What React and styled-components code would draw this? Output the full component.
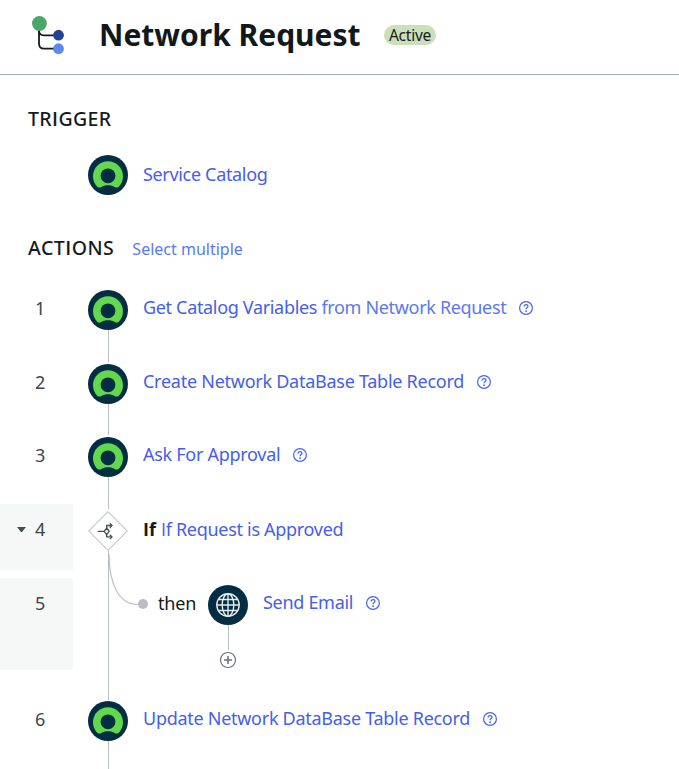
import React from "react";
import styled, { createGlobalStyle } from "styled-components";

const Global = createGlobalStyle`
  * { box-sizing: border-box; }
  html, body { margin: 0; background: #fff; }
  body { overflow: hidden; font-family: "Noto Sans", "Open Sans", sans-serif; color: #161b1c; }
  svg { display: block; }
`;

const Page = styled.main`
  width: 679px;
  height: 769px;
  overflow: hidden;
`;

const Header = styled.header`
  display: flex;
  align-items: center;
  height: 75px;
  padding: 0 28px 4px 28px;
  border-bottom: 1px solid #a3b0b2;
`;

const Title = styled.h1`
  margin: 0 24px 0 31px;
  width: 261px;
  font-size: 30px;
  line-height: 40px;
  font-weight: 700;
  white-space: nowrap;
  color: #10181b;
`;

const Badge = styled.span`
  width: 52px;
  height: 20px;
  border-radius: 10px;
  background: #cbe0b8;
  font-size: 15.5px;
  line-height: 21px;
  letter-spacing: -0.25px;
  text-align: center;
`;

/* Capital I without crossbars */
const PlainI = styled.span`
  font-family: "Open Sans", sans-serif;
`;

const Heading = styled.h2`
  margin: 0;
  font-size: 19.5px;
  letter-spacing: ${(p) => p.$spacing}px;
  line-height: 26px;
  font-weight: 500;
  white-space: nowrap;

  ${PlainI} {
    font-weight: 600;
  }
`;

const HeadingRow = styled.div`
  display: flex;
  align-items: center;
  gap: 18px;
  padding: ${(p) => p.$top}px 0 0 28px;
`;

const TextButton = styled.button`
  border: 0;
  padding: 2px 0 0;
  background: none;
  font: inherit;
  font-size: 16px;
  line-height: 24px;
  color: #5b7af0;
`;

const Row = styled.div`
  display: grid;
  grid-template-columns: 73px 70px 1fr;
  height: ${(p) => p.$height}px;
`;

const Gutter = styled.div`
  display: flex;
  align-items: center;
  height: ${(p) => p.$fill || 50}px;
  padding-bottom: ${(p) => (p.$fill ? p.$fill - 50 : 0)}px;
  padding-left: 17px;
  background: ${(p) => (p.$fill ? "#f6f8f8" : "transparent")};
`;

const Caret = styled.span`
  width: 9px;
  margin-right: 9px;
  border-left: 4.5px solid transparent;
  border-right: 4.5px solid transparent;
  border-top: ${(p) => (p.$shown ? "5px solid #43504f" : "0")};
`;

const Number = styled.span`
  font-size: 18px;
  line-height: 26px;
  color: #3b4749;
`;

const Rail = styled.div`
  position: relative;
  display: flex;
  flex-direction: column;
  align-items: center;
  padding-top: ${(p) => (p.$open ? 0 : 7)}px;
`;

const Line = styled.div`
  flex: 1;
  width: 1px;
  margin: 0 0 -${(p) => p.$over || 0}px 1px;
  background: #bbbfc8;
`;

const Branch = styled.svg`
  position: absolute;
  left: 35px;
  top: -24px;
`;

const Content = styled.div`
  display: flex;
  align-items: center;
  height: ${(p) => (p.$low ? 50 : 48)}px;
  font-size: 18px;
  line-height: 26px;
  white-space: nowrap;
`;

const Link = styled.a`
  color: #4560e6;
  letter-spacing: ${(p) => p.$spacing || -0.3}px;
`;

const Tail = styled.span`
  color: #5a79ee;
`;

const Keyword = styled.strong`
  margin-right: 5px;
  font-weight: 700;
`;

const Help = styled.span`
  margin: 2px 0 0 12px;
`;

const Nested = styled.div`
  display: grid;
  grid-template-columns: 50px 70px 1fr;
`;

const Then = styled.span`
  padding: 12px 0 0 15px;
  font-size: 18px;
  line-height: 26px;
  letter-spacing: -0.2px;
`;

const NestedRail = styled.div`
  display: flex;
  flex-direction: column;
  align-items: center;
  width: 70px;
  padding-top: 7px;
`;

const Stub = styled.div`
  width: 1px;
  height: 25px;
  margin: 0 0 1px 1px;
  background: #bbbfc8;
`;

const TriggerRail = styled.div`
  display: flex;
  justify-content: center;
  padding-top: 23px;
`;

const TriggerContent = styled.div`
  padding-top: 28px;
  font-size: 18px;
  line-height: 28px;
`;

const Steps = styled.section`
  padding-top: 22px;
`;

const FlowIcon = () => (
  <svg width="40" height="44" viewBox="0 0 40 44">
    <g fill="none" stroke="#151b1c" strokeWidth="1.8">
      <path d="M11 12v18.500q0 5.200 5 5.200h14" />
      <path d="M11 17.500q0 4.800 5 4.800h14" />
    </g>
    <circle cx="11.400" cy="10.500" r="7.400" fill="#4ba668" />
    <circle cx="30.500" cy="22.200" r="5.400" fill="#22429a" />
    <circle cx="30.500" cy="35.700" r="5.400" fill="#5b87ef" />
  </svg>
);

const NodeIcon = () => (
  <svg width="40" height="40" viewBox="0 0 40 40">
    <circle cx="20" cy="20" r="20" fill="#032d42" />
    <path
      d="M20 6.200C11.700 6.200 5 12.900 5 21.200c0 4 1.600 7.700 4.200 10.500 .9 1 2.600 1.200 3.800.5 2.100-1.300 4.400-1.900 7-1.900s4.900.6 7 1.900c1.200.7 2.900.5 3.800-.5 2.600-2.800 4.200-6.500 4.200-10.500 0-8.300-6.700-15-15-15z"
      fill="#62d84e"
    />
    <circle cx="20" cy="20.800" r="7.400" fill="#032d42" />
  </svg>
);

const DecisionIcon = () => (
  <svg width="40" height="40" viewBox="0 0 40 40">
    <path d="M20 .7 39.300 20 20 39.300.7 20z" fill="#fff" stroke="#c4c8ca" strokeWidth="1.100" />
    <g fill="none" stroke="#48514f" strokeWidth="1.300">
      <path d="M9.800 20.300h6.200M18.700 17 21.200 20.300 18.700 23.600 16.200 20.300z" />
      <path d="M18.700 17v-2.500h5M18.700 23.600v2.300h5" />
      <path d="M21.800 12.300 24 14.500l-2.200 2.200M21.800 23.700l2.200 2.200-2.200 2.200" />
    </g>
  </svg>
);

const GlobeIcon = () => (
  <svg width="40" height="40" viewBox="0 0 40 40">
    <circle cx="20" cy="20" r="20" fill="#032d42" />
    <g fill="none" stroke="#e4eaec" strokeWidth="1.400">
      <circle cx="20" cy="20" r="11.200" />
      <ellipse cx="20" cy="20" rx="5.800" ry="11.200" />
      <path d="M20 8.800v22.400M8.800 20h22.400M10.500 14.500h19M10.500 25.500h19" />
    </g>
  </svg>
);

const AddIcon = () => (
  <svg width="18" height="18" viewBox="0 0 18 18" fill="none" stroke="#697577">
    <circle cx="9" cy="9" r="7.500" strokeWidth="1.200" />
    <path d="M9 5v8M5 9h8" strokeWidth="1.600" />
  </svg>
);

const HelpIcon = () => (
  <svg width="16" height="16" viewBox="0 0 16 16">
    <circle cx="8" cy="8" r="6.400" fill="none" stroke="#4866e8" strokeWidth="1.200" />
    <path d="M6.100 6.500c0-1.200.8-1.900 2-1.900s1.900.7 1.900 1.700c0 1.200-1.900 1.300-1.900 2.900" fill="none" stroke="#4866e8" strokeWidth="1.300" />
    <circle cx="8.100" cy="11.200" r=".9" fill="#4866e8" />
  </svg>
);

function Action({ n, height, children, help = true, spacing, keyword, fill, decision }) {
  return (
    <Row $height={height}>
      <Gutter $fill={fill}>
        <Caret $shown={decision} />
        <Number>{n}</Number>
      </Gutter>
      <Rail>
        {decision ? <DecisionIcon /> : <NodeIcon />}
        <Line $over={decision ? 0 : 5} />
      </Rail>
      <Content $low={decision}>
        {keyword && <Keyword>{keyword}</Keyword>}
        <Link $spacing={spacing}>{children}</Link>
        {help && <Help><HelpIcon /></Help>}
      </Content>
    </Row>
  );
}

export default function App() {
  return (
    <Page>
      <Global />
      <Header>
        <FlowIcon />
        <Title>Network Request</Title>
        <Badge>Active</Badge>
      </Header>
      <HeadingRow $top={31}>
        <Heading $spacing={0.4}>TR<PlainI>I</PlainI>GGER</Heading>
      </HeadingRow>
      <Row $height={87}>
        <span />
        <TriggerRail><NodeIcon /></TriggerRail>
        <TriggerContent><Link $spacing={-0.33}>Service Catalog</Link></TriggerContent>
      </Row>
      <HeadingRow $top={16}>
        <Heading $spacing={0.5}>ACT<PlainI>I</PlainI>ONS</Heading>
        <TextButton>Select multiple</TextButton>
      </HeadingRow>
      <Steps>
        <Action n={1} height={74} spacing={-0.33}>
          Get Catalog Variables <Tail>from Network Request</Tail>
        </Action>
        <Action n={2} height={73} spacing={-0.26}>Create Network DataBase Table Record</Action>
        <Action n={3} height={74} spacing={-0.28}>Ask For Approval</Action>
        <Action
          n={4}
          height={74}
          fill={66}
          help={false}
          spacing={-0.3}
          keyword={<><PlainI>I</PlainI>f</>}
          decision
        >
          <PlainI>I</PlainI>f Request is Approved
        </Action>
        <Row $height={116}>
          <Gutter $fill={92}>
            <Caret />
            <Number>5</Number>
          </Gutter>
          <Rail $open>
            <Line $over={6} />
            <Branch width="42" height="60" viewBox="0 0 42 60" fill="none">
              <path d="M1 0C1 32 12 50.500 30 50.500" stroke="#bbbdc2" strokeWidth="1.200" />
              <circle cx="35" cy="50" r="5" fill="#bbbdc2" />
            </Branch>
          </Rail>
          <Nested>
            <Then>then</Then>
            <NestedRail>
              <GlobeIcon />
              <Stub />
              <AddIcon />
            </NestedRail>
            <Content>
              <Link $spacing={-0.3}>Send Email</Link>
              <Help><HelpIcon /></Help>
            </Content>
          </Nested>
        </Row>
        <Action n={6} height={90} spacing={-0.28}>Update Network DataBase Table Record</Action>
      </Steps>
    </Page>
  );
}
